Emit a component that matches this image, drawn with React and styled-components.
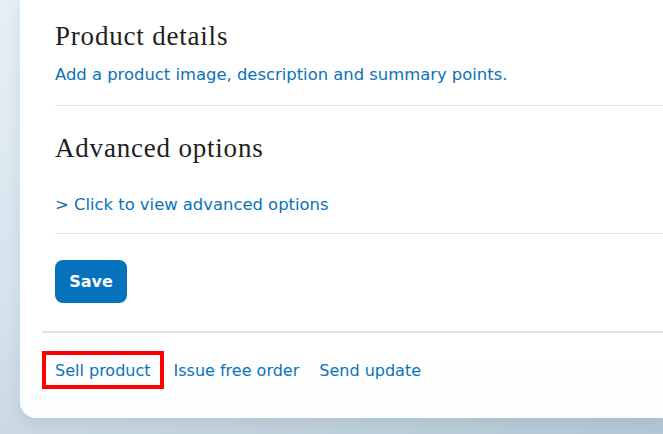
import React from 'react';
import styled, { createGlobalStyle } from 'styled-components';

const BLUE = '#0a72ba';
const SANS = '"DejaVu Sans", "Noto Sans", sans-serif';

const GlobalStyle = createGlobalStyle`
  html, body {
    margin: 0;
    padding: 0;
  }
  body {
    width: 663px;
    height: 434px;
    overflow: hidden;
    background: linear-gradient(160deg, #e6eff6 0%, #d6e3ec 45%, #b3c6d3 100%);
    font-family: ${SANS};
  }
`;

const Page = styled.div`
  padding: 0 0 16px 20px;
`;

const Card = styled.div`
  background: linear-gradient(180deg, #ffffff 85%, #fbfdfe 100%);
  border-bottom-left-radius: 16px;
  box-shadow: 0 4px 14px rgba(60, 90, 120, 0.12);
  padding: 0 0 29px 22px;
`;

const Section = styled.section`
  margin-left: 13px;
  padding: ${p => p.$pad};
  border-bottom: ${p => (p.$last ? 'none' : '1px solid #e6e6e6')};
`;

const Heading = styled.h2`
  margin: 0;
  font-family: "Liberation Serif", "DejaVu Serif", serif;
  font-weight: 400;
  font-size: 27px;
  line-height: 32px;
  color: #1e1e1e;
  letter-spacing: 0.8px;
`;

const TextLink = styled.a`
  display: block;
  margin-top: ${p => p.$top || 12}px;
  font-size: 16.4px;
  line-height: 22px;
  color: ${BLUE};
  text-decoration: none;
  cursor: pointer;
`;

const SaveButton = styled.button`
  width: 72px;
  height: 43px;
  border: none;
  border-radius: 8px;
  background: #0572bb;
  color: #fff;
  font-family: ${SANS};
  font-weight: 700;
  font-size: 16px;
  cursor: pointer;
`;

const Footer = styled.div`
  border-top: 2px solid #e3e3e3;
  padding-top: 18px;
  display: flex;
  align-items: center;
`;

const FooterLink = styled.a`
  padding: ${p => (p.$outlined ? '5px 9px 3px' : '9px 10px 7px')};
  border: ${p => (p.$outlined ? '4px solid #ff0000' : 'none')};
  font-size: 16px;
  line-height: 22px;
  color: ${BLUE};
  text-decoration: none;
  cursor: pointer;
`;

export default function App() {
  return (
    <>
      <GlobalStyle />
      <Page>
        <Card>
          <Section $pad="20px 0 19px 0">
            <Heading>Product details</Heading>
            <TextLink>Add a product image, description and summary points.</TextLink>
          </Section>
          <Section $pad="26px 0 17px 0">
            <Heading>Advanced options</Heading>
            <TextLink $top={30}>&gt; Click to view advanced options</TextLink>
          </Section>
          <Section $last $pad="26px 0 28px 0">
            <SaveButton>Save</SaveButton>
          </Section>
          <Footer>
            <FooterLink $outlined>Sell product</FooterLink>
            <FooterLink>Issue free order</FooterLink>
            <FooterLink>Send update</FooterLink>
          </Footer>
        </Card>
      </Page>
    </>
  );
}
